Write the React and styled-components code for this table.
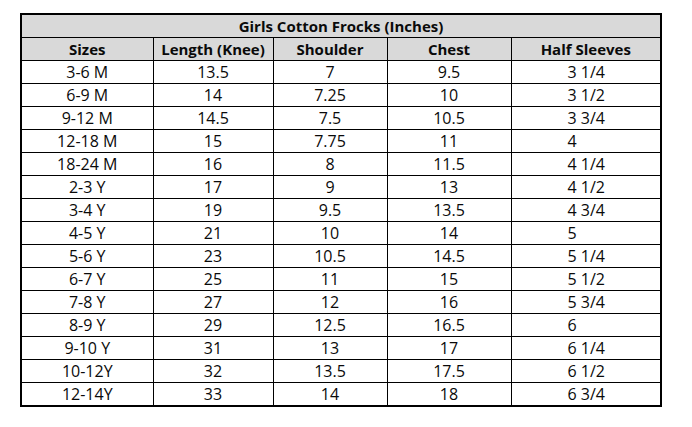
import React from 'react'
import styled, { createGlobalStyle } from 'styled-components';

const rows = [
    ['3-6 M', '13.5', '7', '9.5', '3 1/4'],
    ['6-9 M', '14', '7.25', '10', '3 1/2'],
    ['9-12 M', '14.5', '7.5', '10.5', '3 3/4'],
    ['12-18 M', '15', '7.75', '11', '4'],
    ['18-24 M', '16', '8', '11.5', '4 1/4'],
    ['2-3 Y', '17', '9', '13', '4 1/2'],
    ['3-4 Y', '19', '9.5', '13.5', '4 3/4'],
    ['4-5 Y', '21', '10', '14', '5'],
    ['5-6 Y', '23', '10.5', '14.5', '5 1/4'],
    ['6-7 Y', '25', '11', '15', '5 1/2'],
    ['7-8 Y', '27', '12', '16', '5 3/4'],
    ['8-9 Y', '29', '12.5', '16.5', '6'],
    ['9-10 Y', '31', '13', '17', '6 1/4'],
    ['10-12Y', '32', '13.5', '17.5', '6 1/2'],
    ['12-14Y', '33', '14', '18', '6 3/4'],
];

const headers = ['Sizes', 'Length (Knee)', 'Shoulder', 'Chest', 'Half Sleeves'];
const widths = [132, 120, 114, 124, 150];

const App = () => {
    return (
        <Page>
            <GlobalStyle />
            <Table>
                <colgroup>
                    {widths.map((w, i) => <col key={i} style={{ width: w }} />)}
                </colgroup>
                <thead>
                    <tr>
                        <HeadCell colSpan={5}>Girls Cotton Frocks (Inches)</HeadCell>
                    </tr>
                    <tr>
                        {headers.map(h => <HeadCell key={h}>{h}</HeadCell>)}
                    </tr>
                </thead>
                <tbody>
                    {rows.map(r => (
                        <tr key={r[0]}>
                            {r.map((v, i) => (
                                <Cell key={i} $left={i === 4}>{v}</Cell>
                            ))}
                        </tr>
                    ))}
                </tbody>
            </Table>
        </Page>
    )
}

export default App;

const GlobalStyle = createGlobalStyle`
    body {
        margin: 0;
        background: #fff;
        font-family: "Open Sans", "Noto Sans", sans-serif;
    }
`
const Page = styled.div`
    padding: 13px 0 0 20px;
    width: 692px;
    height: 427px;
    box-sizing: border-box;
`
const Table = styled.table`
    border-collapse: collapse;
    table-layout: fixed;
    width: 642px;
    border: 2px solid #000;
    color: #0a0a0a;
`
const Cell = styled.td`
    border: 1px solid #000;
    height: 22px;
    padding: 0;
    padding-left: ${p => (p.$left ? '56px' : '0')};
    text-align: ${p => (p.$left ? 'left' : 'center')};
    font-size: 16px;
    line-height: 22px;
    white-space: nowrap;
`
const HeadCell = styled.th`
    border: 1px solid #000;
    background: #d9d9d9;
    height: 22px;
    padding: 0;
    font-size: 15px;
    font-weight: 700;
    line-height: 22px;
    white-space: nowrap;
`
